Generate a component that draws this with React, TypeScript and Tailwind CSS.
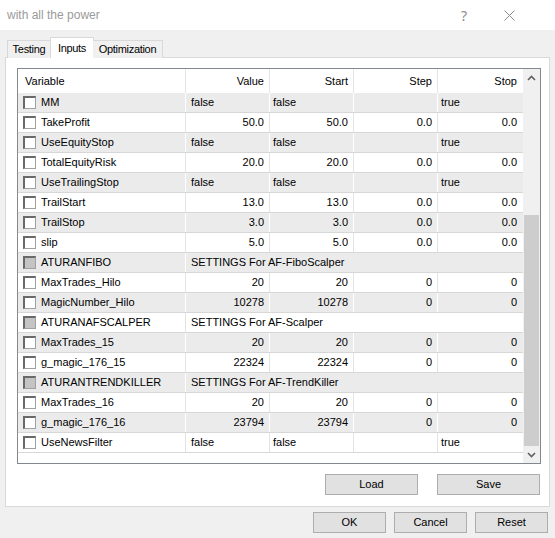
import React from 'react'

type Row =
  | { kind: 'num'; name: string; value: string; start: string; step: string; stop: string }
  | { kind: 'bool'; name: string; value: string; start: string; stop: string }
  | { kind: 'section'; name: string; text: string }

const rows: Row[] = [
  { kind: 'bool', name: 'MM', value: 'false', start: 'false', stop: 'true' },
  { kind: 'num', name: 'TakeProfit', value: '50.0', start: '50.0', step: '0.0', stop: '0.0' },
  { kind: 'bool', name: 'UseEquityStop', value: 'false', start: 'false', stop: 'true' },
  { kind: 'num', name: 'TotalEquityRisk', value: '20.0', start: '20.0', step: '0.0', stop: '0.0' },
  { kind: 'bool', name: 'UseTrailingStop', value: 'false', start: 'false', stop: 'true' },
  { kind: 'num', name: 'TrailStart', value: '13.0', start: '13.0', step: '0.0', stop: '0.0' },
  { kind: 'num', name: 'TrailStop', value: '3.0', start: '3.0', step: '0.0', stop: '0.0' },
  { kind: 'num', name: 'slip', value: '5.0', start: '5.0', step: '0.0', stop: '0.0' },
  { kind: 'section', name: 'ATURANFIBO', text: 'SETTINGS For AF-FiboScalper' },
  { kind: 'num', name: 'MaxTrades_Hilo', value: '20', start: '20', step: '0', stop: '0' },
  { kind: 'num', name: 'MagicNumber_Hilo', value: '10278', start: '10278', step: '0', stop: '0' },
  { kind: 'section', name: 'ATURANAFSCALPER', text: 'SETTINGS For AF-Scalper' },
  { kind: 'num', name: 'MaxTrades_15', value: '20', start: '20', step: '0', stop: '0' },
  { kind: 'num', name: 'g_magic_176_15', value: '22324', start: '22324', step: '0', stop: '0' },
  { kind: 'section', name: 'ATURANTRENDKILLER', text: 'SETTINGS For AF-TrendKiller' },
  { kind: 'num', name: 'MaxTrades_16', value: '20', start: '20', step: '0', stop: '0' },
  { kind: 'num', name: 'g_magic_176_16', value: '23794', start: '23794', step: '0', stop: '0' },
  { kind: 'bool', name: 'UseNewsFilter', value: 'false', start: 'false', stop: 'true' }
]

function Checkbox({ filled }: { filled?: boolean }) {
  return (
    <span
      className={`w-[13px] h-[13px] shrink-0 border border-[#a0a0a0] border-t-[#696969] border-l-[#696969] border-t-2 border-l-2 ${
        filled ? 'bg-[#c4c4c4]' : 'bg-white'
      }`}
    />
  )
}

function Btn({ label, w }: { label: string; w: string }) {
  return (
    <button
      className={`${w} h-[21px] bg-[#e1e1e1] border border-[#adadad] text-[11px] text-black flex items-center justify-center`}
    >
      {label}
    </button>
  )
}

function DataRow({ row, gray }: { row: Row; gray: boolean }) {
  const bg = gray ? 'bg-[#ebebeb]' : 'bg-white'
  const sep = gray ? 'border-r-white' : 'border-r-[#e3e3e3]'
  const cell = `h-full flex items-center border-r ${sep}`
  return (
    <div className={`h-[20px] flex border-b border-[#d7d7d7] ${bg}`}>
      <div className={`w-[168px] ${cell} pl-[5px] gap-[5px]`}>
        <Checkbox filled={row.kind === 'section'} />
        <span>{row.name}</span>
      </div>
      {row.kind === 'section' ? (
        <div className="flex-1 h-full flex items-center pl-[5px] whitespace-nowrap">{row.text}</div>
      ) : row.kind === 'bool' ? (
        <>
          <div className={`w-[84px] ${cell} pl-[5px]`}>{row.value}</div>
          <div className={`w-[84px] ${cell} pl-[3px]`}>{row.start}</div>
          <div className={`w-[84px] ${cell}`} />
          <div className="w-[84px] h-full flex items-center pl-[3px]">{row.stop}</div>
        </>
      ) : (
        <>
          <div className={`w-[84px] ${cell} justify-end pr-[5px]`}>{row.value}</div>
          <div className={`w-[84px] ${cell} justify-end pr-[5px]`}>{row.start}</div>
          <div className={`w-[84px] ${cell} justify-end pr-[5px]`}>{row.step}</div>
          <div className="w-[84px] h-full flex items-center justify-end pr-[5px]">{row.stop}</div>
        </>
      )}
    </div>
  )
}

export default function App() {
  return (
    <div className="w-[555px] h-[538px] bg-[#f0f0f0] flex flex-col text-[11px] text-black font-['Liberation_Sans',Arial,sans-serif] overflow-hidden">
      <div className="h-[30px] bg-white flex items-center pl-[7px] shrink-0">
        <span className="text-[12px] text-[#9a9a9a]">with all the power</span>
        <span className="ml-auto mr-[37px] text-[14px] text-[#8a8a8a] font-['Noto_Sans',sans-serif]">?</span>
        <svg width="11" height="11" viewBox="0 0 11 11" className="mr-[40px]">
          <path d="M0.5 0.5 L10.5 10.5 M10.5 0.5 L0.5 10.5" stroke="#8a8a8a" strokeWidth="1" />
        </svg>
      </div>

      <div className="flex items-end pl-[7px] pt-[7px] h-[27px] shrink-0 relative z-10">
        <div className="w-[44px] h-[18px] flex items-center justify-center bg-[#f0f0f0] border border-[#d9d9d9] border-b-0 -mb-px tracking-[-0.3px]">
          Testing
        </div>
        <div className="w-[44px] h-[21px] -ml-px flex items-start justify-center pt-[2px] bg-white border border-[#d9d9d9] border-b-0 -mb-px tracking-[-0.3px]">
          Inputs
        </div>
        <div className="w-[70px] h-[18px] -ml-px flex items-center justify-center bg-[#f0f0f0] border border-[#d9d9d9] border-b-0 border-l-0 -mb-px tracking-[-0.3px]">
          Optimization
        </div>
      </div>

      <div className="mx-[5px] h-[450px] bg-white border border-[#d9d9d9] flex flex-col shrink-0">
        <div className="ml-[11px] mt-[10px] w-[524px] h-[396px] border border-[#828790] flex">
          <div className="flex-1 flex flex-col">
            <div className="h-[24px] flex bg-white">
              <div className="w-[168px] h-full flex items-center pl-[7px] border-r border-[#e5e5e5]">Variable</div>
              <div className="w-[84px] h-full flex items-center justify-end pr-[5px] border-r border-[#e5e5e5]">Value</div>
              <div className="w-[84px] h-full flex items-center justify-end pr-[5px] border-r border-[#e5e5e5]">Start</div>
              <div className="w-[84px] h-full flex items-center justify-end pr-[5px] border-r border-[#e5e5e5]">Step</div>
              <div className="w-[84px] h-full flex items-center justify-end pr-[5px]">Stop</div>
            </div>
            {rows.map((r, i) => (
              <DataRow key={r.name} row={r} gray={i % 2 === 0} />
            ))}
          </div>
          <div className="w-[17px] bg-[#f0f0f0] flex flex-col">
            <div className="h-[17px] flex items-center justify-center">
              <svg width="9" height="6" viewBox="0 0 9 6">
                <path d="M1 5 L4.5 1.5 L8 5" stroke="#606060" strokeWidth="1.6" fill="none" />
              </svg>
            </div>
            <div className="h-[129px]" />
            <div className="flex-1 mx-[1px] bg-[#cdcdcd]" />
            <div className="h-[17px] flex items-center justify-center">
              <svg width="9" height="6" viewBox="0 0 9 6">
                <path d="M1 1 L4.5 4.5 L8 1" stroke="#606060" strokeWidth="1.6" fill="none" />
              </svg>
            </div>
          </div>
        </div>
        <div className="flex justify-end gap-[19px] mt-[10px] mr-[9px]">
          <Btn label="Load" w="w-[93px]" />
          <Btn label="Save" w="w-[103px]" />
        </div>
      </div>

      <div className="flex justify-end gap-[8px] mt-[5px] mr-[7px]">
        <Btn label="OK" w="w-[73px]" />
        <Btn label="Cancel" w="w-[73px]" />
        <Btn label="Reset" w="w-[73px]" />
      </div>
    </div>
  )
}
